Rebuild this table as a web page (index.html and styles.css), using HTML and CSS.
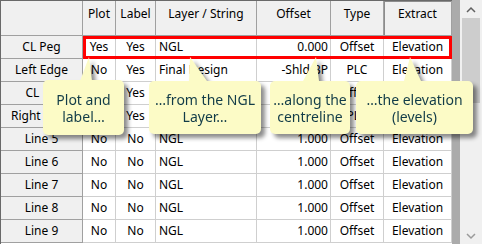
FILE: index.html
```html
<!DOCTYPE html>
<html lang="en">

<head>
    <meta charset="UTF-8">
    <title>Strings</title>
    <link rel="stylesheet" href="styles.css">
</head>

<body>
    <div class="frame">

        <div class="grid">
            <!-- header -->
            <div class="hd corner"></div>
            <div class="hd">Plot</div>
            <div class="hd">Label</div>
            <div class="hd">Layer / String</div>
            <div class="hd">Offset</div>
            <div class="hd">Type</div>
            <div class="hd hot">Extract</div>

            <div class="rh">CL Peg</div>
            <div class="c mid">Yes</div>
            <div class="c mid">Yes</div>
            <div class="c">NGL</div>
            <div class="c num">0.000</div>
            <div class="c mid">Offset</div>
            <div class="c mid">Elevation</div>

            <div class="rh">Left Edge</div>
            <div class="c mid">No</div>
            <div class="c mid">Yes</div>
            <div class="c">Final Design</div>
            <div class="c num">-Shld BP</div>
            <div class="c mid">PLC</div>
            <div class="c mid">Elevation</div>

            <div class="rh">CL FD</div>
            <div class="c mid">Yes</div>
            <div class="c mid">Yes</div>
            <div class="c">Final Design</div>
            <div class="c num">0.000</div>
            <div class="c mid">Offset</div>
            <div class="c mid">Elevation</div>

            <div class="rh">Right Edge</div>
            <div class="c mid">Yes</div>
            <div class="c mid">Yes</div>
            <div class="c">Final Design</div>
            <div class="c num">Shld BP</div>
            <div class="c mid">PLC</div>
            <div class="c mid">Elevation</div>

            <div class="rh">Line 5</div>
            <div class="c mid">No</div>
            <div class="c mid">No</div>
            <div class="c">NGL</div>
            <div class="c num">1.000</div>
            <div class="c mid">Offset</div>
            <div class="c mid">Elevation</div>

            <div class="rh">Line 6</div>
            <div class="c mid">No</div>
            <div class="c mid">No</div>
            <div class="c">NGL</div>
            <div class="c num">1.000</div>
            <div class="c mid">Offset</div>
            <div class="c mid">Elevation</div>

            <div class="rh">Line 7</div>
            <div class="c mid">No</div>
            <div class="c mid">No</div>
            <div class="c">NGL</div>
            <div class="c num">1.000</div>
            <div class="c mid">Offset</div>
            <div class="c mid">Elevation</div>

            <div class="rh">Line 8</div>
            <div class="c mid">No</div>
            <div class="c mid">No</div>
            <div class="c">NGL</div>
            <div class="c num">1.000</div>
            <div class="c mid">Offset</div>
            <div class="c mid">Elevation</div>

            <div class="rh">Line 9</div>
            <div class="c mid">No</div>
            <div class="c mid">No</div>
            <div class="c">NGL</div>
            <div class="c num">1.000</div>
            <div class="c mid">Offset</div>
            <div class="c mid">Elevation</div>
        </div>

        <!-- empty grid background right of the last column -->
        <div class="gutter"></div>

        <div class="vscroll">
            <svg class="arrow" width="22" height="18" viewBox="0 0 22 18">
                <path d="M7 12 L11 8 L15 12" fill="none" stroke="#606060" stroke-width="1.5" />
            </svg>
            <div class="thumb"></div>
            <div class="track"></div>
            <svg class="arrow" width="22" height="18" viewBox="0 0 22 18">
                <path d="M7 8 L11 12 L15 8" fill="none" stroke="#9a9a9a" stroke-width="1.5" />
            </svg>
        </div>

        <!-- selected row outline -->
        <div class="highlight"></div>

        <!-- callouts -->
        <div class="callout c1">
            <div class="tail"></div>
            <div class="bubble">Plot and<br>label…</div>
        </div>
        <div class="callout c2">
            <div class="tail"></div>
            <div class="bubble">…from the NGL<br>Layer…</div>
        </div>
        <div class="callout c3">
            <div class="tail"></div>
            <div class="bubble">…along the<br>centreline</div>
        </div>
        <div class="callout c4">
            <div class="tail"></div>
            <div class="bubble">…the elevation<br>(levels)</div>
        </div>

    </div>
</body>

</html>
```

FILE: styles.css
```css
* {
    box-sizing: border-box;
}

body {
    margin: 0;
    background-color: white;
    font-family: "Noto Sans", "Open Sans", sans-serif;
    font-size: 12px;
    color: black;
}

.frame {
    position: relative;
    display: flex;
    width: 482px;
    height: 244px;
    overflow: hidden;
}

.grid {
    display: grid;
    grid-template-columns: 82px 33px 40px 101px 74px 53px 68px;
    grid-template-rows: 35px repeat(9, 23px);
    border-left: 1px solid #696969;
    border-top: 1px solid #696969;
    flex: none;
}

.hd {
    background-color: #f0f0f0;
    border-right: 1px solid #a0a0a0;
    border-bottom: 1px solid #a0a0a0;
    text-align: center;
    padding-top: 4px;
    line-height: 17px;
}

.hd.hot {
    box-shadow: inset 1px 1px 0 #8c8c8c;
}

.rh {
    background-color: #f0f0f0;
    border-right: 1px solid #a0a0a0;
    border-bottom: 1px solid #a0a0a0;
    text-align: center;
    line-height: 22px;
}

.c {
    background-color: white;
    border-right: 1px solid #cfcfcf;
    border-bottom: 1px solid #cfcfcf;
    line-height: 22px;
    padding: 0 3px;
    white-space: nowrap;
    overflow: hidden;
}

.mid {
    text-align: center;
}

.num {
    text-align: right;
    padding-right: 2px;
}

.gutter {
    width: 8px;
    background-color: #ababab;
    flex: none;
}

.vscroll {
    width: 22px;
    background-color: #f0f0f0;
    display: flex;
    flex-direction: column;
    align-items: center;
}

.arrow {
    display: block;
    flex: none;
}

.thumb {
    width: 18px;
    height: 85px;
    background-color: #cdcdcd;
    flex: none;
}

.track {
    flex: 1;
}

.highlight {
    position: absolute;
    left: 83px;
    top: 36px;
    width: 369px;
    height: 23px;
    border: 3px solid #ff0000;
}

/* yellow speech bubbles */
.callout {
    position: absolute;
    filter: drop-shadow(4px 4px 2px rgba(0, 0, 0, 0.45));
}

.bubble {
    position: absolute;
    background-color: #fcfbc6;
    border-radius: 5px;
    display: flex;
    align-items: center;
    justify-content: center;
    text-align: center;
    font-size: 14px;
    line-height: 17px;
    color: #123c48;
}

.tail {
    position: absolute;
    top: 0;
    height: 24px;
    background-color: #fcfbc6;
}

.c1 {
    left: 43px;
    top: 57px;
}

.c1 .bubble {
    left: 0;
    top: 23px;
    width: 81px;
    height: 55px;
}

.c1 .tail {
    left: 37px;
    width: 12px;
    clip-path: polygon(9px 0, 12px 24px, 0 24px);
}

.c2 {
    left: 149px;
    top: 57px;
}

.c2 .bubble {
    left: 0;
    top: 24px;
    width: 112px;
    height: 53px;
}

.c2 .tail {
    left: 40px;
    width: 18px;
    clip-path: polygon(1px 0, 18px 24px, 0 24px);
}

.c3 {
    left: 270px;
    top: 57px;
}

.c3 .bubble {
    left: 0;
    top: 24px;
    width: 80px;
    height: 53px;
}

.c3 .tail {
    left: 33px;
    width: 16px;
    clip-path: polygon(13px 0, 16px 24px, 0 24px);
}

.c4 {
    left: 356px;
    top: 57px;
}

.c4 .bubble {
    left: 0;
    top: 24px;
    width: 117px;
    height: 53px;
}

.c4 .tail {
    left: 48px;
    width: 17px;
    clip-path: polygon(6px 0, 17px 24px, 0 24px);
}
```
